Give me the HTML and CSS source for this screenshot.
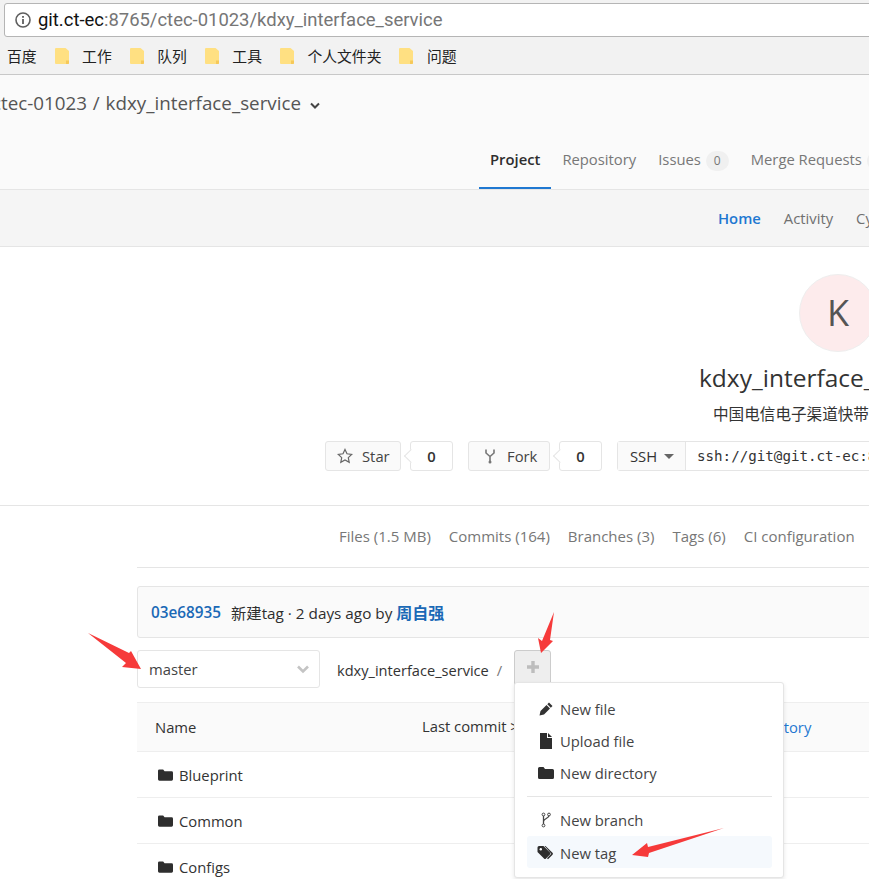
FILE: index.html
```html
<!DOCTYPE html>
<html lang="en">
<head>
    <meta charset="UTF-8">
    <title>kdxy_interface_service</title>
    <link rel="stylesheet" href="styles.css">
</head>
<body>

    <div class="chrome">
        <div class="address">
            <svg class="info-icon" width="18" height="18" viewBox="0 0 18 18">
                <circle cx="9" cy="9" r="7" fill="none" stroke="#5f5f5f" stroke-width="1.6"/>
                <rect x="8.1" y="8" width="1.8" height="5" fill="#5f5f5f"/>
                <rect x="8.1" y="5" width="1.8" height="1.8" fill="#5f5f5f"/>
            </svg>
            <span class="host">git.ct-ec</span><span class="path">:8765/ctec-01023/kdxy_interface_service</span>
        </div>
        <div class="bookmarks">
            <span class="bookmark first">百度</span>
            <svg class="bm-folder"><use href="#bm"/></svg><span class="bookmark">工作</span>
            <svg class="bm-folder"><use href="#bm"/></svg><span class="bookmark">队列</span>
            <svg class="bm-folder"><use href="#bm"/></svg><span class="bookmark">工具</span>
            <svg class="bm-folder"><use href="#bm"/></svg><span class="bookmark">个人文件夹</span>
            <svg class="bm-folder"><use href="#bm"/></svg><span class="bookmark">问题</span>
        </div>
    </div>

    <svg class="defs" width="0" height="0">
        <symbol id="bm" viewBox="0 0 15 16">
            <path d="M1 0h9.500L14 3v12a1 1 0 0 1-1 1H1a1 1 0 0 1-1-1V1a1 1 0 0 1 1-1z" fill="#ffe082"/>
            <path d="M11 16v-3.500h3V15a1 1 0 0 1-1 1z" fill="#f6c95a"/>
        </symbol>
        <symbol id="folder" viewBox="0 0 16 14">
            <path d="M1.500 1h4l1.500 2h7.500A1.500 1.500 0 0 1 16 4.500v7a1.500 1.500 0 0 1-1.500 1.500h-13A1.500 1.500 0 0 1 0 11.500v-9A1.500 1.500 0 0 1 1.500 1z" fill="#2e2e2e"/>
        </symbol>
    </svg>

    <header class="top">
        <div class="project-title">ctec-01023 / kdxy_interface_service
            <svg class="caret" width="12" height="8" viewBox="0 0 12 8"><path d="M2 1.500l4 4 4-4" fill="none" stroke="#444" stroke-width="2"/></svg>
        </div>
        <nav class="tabs">
            <a class="tab active">Project</a>
            <a class="tab">Repository</a>
            <a class="tab">Issues <span class="badge">0</span></a>
            <a class="tab">Merge Requests <span class="badge">0</span></a>
        </nav>
    </header>

    <nav class="subnav">
        <a class="active">Home</a>
        <a>Activity</a>
        <a>Cycle Analytics</a>
    </nav>

    <section class="project">
        <div class="avatar">K</div>
        <h1>kdxy_interface_service</h1>
        <p class="desc">中国电信电子渠道快带接口服务</p>
        <div class="actions">
            <span class="btn star-btn">
                <svg width="16" height="16" viewBox="0 0 16 16"><path d="M8 1.500l2 4.300 4.700.6-3.400 3.200.9 4.700L8 12l-4.200 2.300.9-4.700L1.300 6.400 6 5.800z" fill="none" stroke="#666" stroke-width="1.200"/></svg>
                Star
            </span>
            <span class="count">0</span>
            <span class="btn fork-btn">
                <svg width="14" height="16" viewBox="0 0 14 16"><path d="M3 1.500v3.500l4 3.500 4-3.500V1.500M7 8.500v5" fill="none" stroke="#777" stroke-width="1.600"/><circle cx="7" cy="14" r="1.500" fill="#777"/></svg>
                Fork
            </span>
            <span class="count">0</span>
            <span class="clone">
                <span class="clone-type">SSH <i class="tri"></i></span>
                <span class="clone-url">ssh://git@git.ct-ec:8765/ctec-01023/kdxy_interface_service.git</span>
            </span>
        </div>
    </section>

    <nav class="stats">
        <a>Files (1.5 MB)</a>
        <a>Commits (164)</a>
        <a>Branches (3)</a>
        <a>Tags (6)</a>
        <a>CI configuration</a>
    </nav>

    <main class="repo">
        <div class="commit">
            <a class="sha">03e68935</a>
            <span class="commit-msg">新建tag · 2 days ago by <a class="author">周自强</a></span>
        </div>

        <div class="tree-bar">
            <div class="branch-select">master
                <svg width="14" height="9" viewBox="0 0 14 9"><path d="M2 1.500l5 5 5-5" fill="none" stroke="#c4c4c4" stroke-width="2.600"/></svg>
            </div>
            <span class="crumb">kdxy_interface_service</span>
            <span class="slash">/</span>
            <div class="plus-btn">
                <svg width="12" height="12" viewBox="0 0 12 12"><path d="M6 0v12M0 6h12" stroke="#bdbdbd" stroke-width="3.400"/></svg>
            </div>
        </div>

        <div class="table-head">
            <span class="col-name">Name</span>
            <span class="col-commit">Last commit &gt;</span>
            <a class="col-history">History</a>
        </div>
        <div class="row"><svg class="folder"><use href="#folder"/></svg>Blueprint</div>
        <div class="row"><svg class="folder"><use href="#folder"/></svg>Common</div>
        <div class="row"><svg class="folder"><use href="#folder"/></svg>Configs</div>
    </main>

    <div class="dropdown">
        <a class="item">
            <svg width="16" height="16" viewBox="0 0 16 16"><path d="M11 1.500l3.500 3.500-1.700 1.700-3.500-3.500zM8.500 4l3.500 3.500L6 13.500 1.500 14.500l1-4.500z" fill="#333"/></svg>
            New file
        </a>
        <a class="item">
            <svg width="16" height="16" viewBox="0 0 16 16"><path d="M2 0h7v5h5v11H2zM10 0l4 4h-4z" fill="#2e2e2e"/></svg>
            Upload file
        </a>
        <a class="item">
            <svg class="folder"><use href="#folder"/></svg>
            New directory
        </a>
        <div class="divider"></div>
        <a class="item">
            <svg width="16" height="16" viewBox="0 0 16 16"><path d="M5.500 3v10M11 3.500c0 3-5.500 3-5.500 6" fill="none" stroke="#444" stroke-width="1.300"/><circle cx="5.500" cy="2.500" r="1.400" fill="#fff" stroke="#444"/><circle cx="5.500" cy="13.500" r="1.400" fill="#fff" stroke="#444"/><circle cx="11" cy="2.500" r="1.400" fill="#fff" stroke="#444"/></svg>
            New branch
        </a>
        <a class="item focused">
            <svg class="tag-icon" width="18" height="16" viewBox="0 0 18 16"><path d="M.5 2.500A1.500 1.500 0 0 1 2 1h4.500L13 7.500a1.400 1.400 0 0 1 0 2L9 13.500a1.400 1.400 0 0 1-2 0L.5 7z" fill="#2e2e2e"/><path d="M8.500 1l7 6.700a1.400 1.400 0 0 1 0 2l-4.500 4.500-1-1 4.300-4.400L7.500 1z" fill="#2e2e2e"/><circle cx="3.800" cy="4.300" r="1.200" fill="#fff"/></svg>
            New tag
        </a>
    </div>

    <svg class="arrows" width="869" height="879" viewBox="0 0 869 879">
        <path d="M88 633L129 653 131 651 141 669 122 667 126 663z" fill="#f63a3a"/>
        <path d="M554 612L550 640 553 641 541 653 538 638 542 641z" fill="#f63a3a"/>
        <path d="M724 828L648 847 647 843 632 855 648 857 649 853z" fill="#f63a3a"/>
    </svg>

</body>
</html>
```

FILE: styles.css
```css
* {
    box-sizing: border-box;
}
html, body {
    height: 879px;
    overflow: hidden;
}
body {
    margin: 0;
    position: relative;
    background: #fff;
    font-family: "Open Sans", "Noto Sans CJK SC", sans-serif;
    font-size: 14.800px;
    color: #2e2e2e;
}
.defs {
    position: absolute;
}

/* browser bar */
.chrome {
    height: 75px;
    padding-top: 3px;
    background: #f2f2f2;
    border-bottom: 1px solid #c8c8c8;
    white-space: nowrap;
}
.address {
    display: flex;
    align-items: center;
    width: 900px;
    height: 34px;
    margin-left: 4px;
    padding-left: 9px;
    background: #fff;
    border: 1px solid #b5b5b5;
    border-radius: 3px;
    font-family: Roboto, sans-serif;
    font-size: 18.450px;
}
.info-icon {
    margin-right: 6px;
    flex: none;
}
.host {
    color: #111;
}
.path {
    color: #767676;
}
.bookmarks {
    display: flex;
    align-items: center;
    height: 37px;
    padding-left: 7px;
    font-size: 14.800px;
    color: #222;
}
.bm-folder {
    width: 15px;
    height: 16px;
    margin: 0 12.500px 0 18px;
    flex: none;
}

/* project header */
.top {
    height: 115px;
    background: #fafafa;
    border-bottom: 1px solid #e5e5e5;
    white-space: nowrap;
}
.project-title {
    height: 70px;
    margin-left: -8px;
    padding-top: 16px;
    font-size: 18.800px;
    color: #555;
    line-height: 24px;
    word-spacing: 1px;
}
.caret {
    margin-left: 2px;
}
.tabs {
    display: flex;
    height: 44px;
    padding-left: 479px;
    color: #777;
}
.tab {
    height: 44px;
    padding: 3px 11px 0;
    line-height: 22px;
}
.tab.active {
    color: #2e2e2e;
    font-weight: 600;
    border-bottom: 2px solid #1f78d1;
}
.badge {
    display: inline-block;
    min-width: 23px;
    height: 20px;
    margin-left: 1px;
    line-height: 20px;
    font-size: 12px;
    text-align: center;
    background: #f0f0f0;
    border-radius: 10px;
}

.subnav {
    display: flex;
    gap: 23px;
    height: 57px;
    padding: 17px 0 0 718px;
    background: #f5f5f5;
    border-bottom: 1px solid #e5e5e5;
    color: #707070;
    line-height: 22px;
    white-space: nowrap;
}
.subnav .active {
    color: #1f78d1;
    font-weight: 600;
}

/* project info */
.project {
    height: 259px;
    padding-top: 27px;
    border-bottom: 1px solid #e5e5e5;
    white-space: nowrap;
}
.avatar {
    width: 78px;
    height: 78px;
    margin-left: 799px;
    border-radius: 50%;
    background: #fdebec;
    border: 1px solid #eee;
    color: #555;
    font-size: 36px;
    line-height: 76px;
    text-align: center;
}
.project h1 {
    margin: 8px 0 0 699px;
    font-size: 24.500px;
    font-weight: 400;
    line-height: 36px;
    color: #333;
}
.desc {
    margin: 7px 0 0 713px;
    font-size: 15.600px;
    line-height: 22px;
    color: #333;
}
.actions {
    display: flex;
    align-items: flex-start;
    height: 30px;
    margin: 16px 0 0 325px;
}
.actions > * {
    flex: none;
}
.btn {
    display: flex;
    align-items: center;
    height: 30px;
    background: #fafafa;
    border: 1px solid #e5e5e5;
    border-radius: 3px;
    color: #444;
}
.star-btn {
    width: 76px;
    padding-left: 11px;
    gap: 9px;
}
.fork-btn {
    width: 82px;
    margin-left: 15px;
    padding-left: 14px;
    gap: 10px;
}
.count {
    position: relative;
    width: 43px;
    height: 30px;
    margin-left: 9px;
    border: 1px solid #e5e5e5;
    border-radius: 3px;
    text-align: center;
    line-height: 28px;
    font-weight: 600;
    color: #333;
}
.count::before {
    content: "";
    position: absolute;
    left: -5px;
    top: 9px;
    width: 9px;
    height: 9px;
    background: #fff;
    border-left: 1px solid #e5e5e5;
    border-bottom: 1px solid #e5e5e5;
    transform: rotate(45deg);
}
.clone {
    display: flex;
    height: 30px;
    margin-left: 15px;
    border: 1px solid #e5e5e5;
    border-radius: 3px;
}
.clone-type {
    display: flex;
    align-items: center;
    width: 68px;
    padding-left: 12px;
    background: #fafafa;
    border-right: 1px solid #e5e5e5;
    color: #333;
}
.tri {
    width: 0;
    height: 0;
    margin-left: 7px;
    border: 5px solid transparent;
    border-top: 5px solid #666;
    border-bottom: 0;
}
.clone-url {
    padding-left: 11px;
    font-family: "DejaVu Sans Mono", monospace;
    font-size: 14.200px;
    line-height: 28px;
    color: #333;
}

.stats {
    display: flex;
    gap: 18px;
    height: 62px;
    margin-left: 137px;
    padding: 19px 0 0 202px;
    border-bottom: 1px solid #e5e5e5;
    font-size: 15px;
    color: #777;
    line-height: 22px;
    white-space: nowrap;
}

/* repository files */
.repo {
    width: 900px;
    margin-left: 137px;
    padding-top: 18px;
}
.commit {
    display: flex;
    gap: 10px;
    height: 52px;
    padding: 0 13px;
    align-items: center;
    background: #fafafa;
    border: 1px solid #e5e5e5;
    border-radius: 3px;
    font-size: 15.300px;
}
.sha {
    color: #1b69b6;
    font-weight: 600;
}
.author {
    color: #1b69b6;
    font-weight: 600;
    font-size: 16px;
}
.tree-bar {
    display: flex;
    align-items: flex-start;
    height: 64px;
    padding-top: 12px;
}
.branch-select {
    display: flex;
    align-items: center;
    justify-content: space-between;
    width: 183px;
    height: 38px;
    padding: 0 9px 0 11px;
    border: 1px solid #e5e5e5;
    border-radius: 3px;
    color: #444;
}
.crumb {
    margin-left: 17px;
    font-size: 14.600px;
    line-height: 40px;
    color: #333;
}
.slash {
    margin-left: 8px;
    line-height: 40px;
    color: #777;
}
.plus-btn {
    display: flex;
    align-items: center;
    justify-content: center;
    width: 37px;
    height: 36px;
    margin-left: 12px;
    padding-bottom: 3px;
    background: #eee;
    border: 1px solid #ccc;
    border-radius: 3px 3px 0 0;
}
.table-head {
    display: flex;
    height: 50px;
    padding-left: 18px;
    align-items: center;
    background: #fafafa;
    border-top: 1px solid #eee;
    border-bottom: 1px solid #eee;
    color: #333;
}
.col-name {
    width: 267px;
}
.col-commit {
    width: 340px;
    margin-top: -3px;
}
.col-history {
    color: #1f78d1;
}
.row {
    display: flex;
    align-items: center;
    height: 46px;
    padding-left: 21px;
    border-bottom: 1px solid #eee;
    color: #333;
}
.folder {
    width: 15px;
    height: 14px;
    margin-right: 6px;
    flex: none;
}

/* create menu */
.dropdown {
    position: absolute;
    left: 514px;
    top: 682px;
    width: 270px;
    height: 196px;
    padding: 10px 11px 10px 12px;
    background: #fff;
    border: 1px solid #e5e5e5;
    border-radius: 3px;
    box-shadow: 0 2px 4px rgba(0,0,0,0.1);
    color: #444;
}
.item {
    display: flex;
    align-items: center;
    height: 32px;
    padding-left: 11px;
    gap: 6px;
    border-radius: 3px;
}
.item svg {
    width: 16px;
    flex: none;
    margin: 0;
}
.item .tag-icon {
    width: 18px;
    margin: 0 -1px 0 -1px;
}
.item.focused {
    padding-top: 1px;
    background: #f5f9fd;
}
.divider {
    height: 1px;
    margin: 7px 0;
    background: #e5e5e5;
}
.arrows {
    position: absolute;
    left: 0;
    top: 0;
    pointer-events: none;
}
```
